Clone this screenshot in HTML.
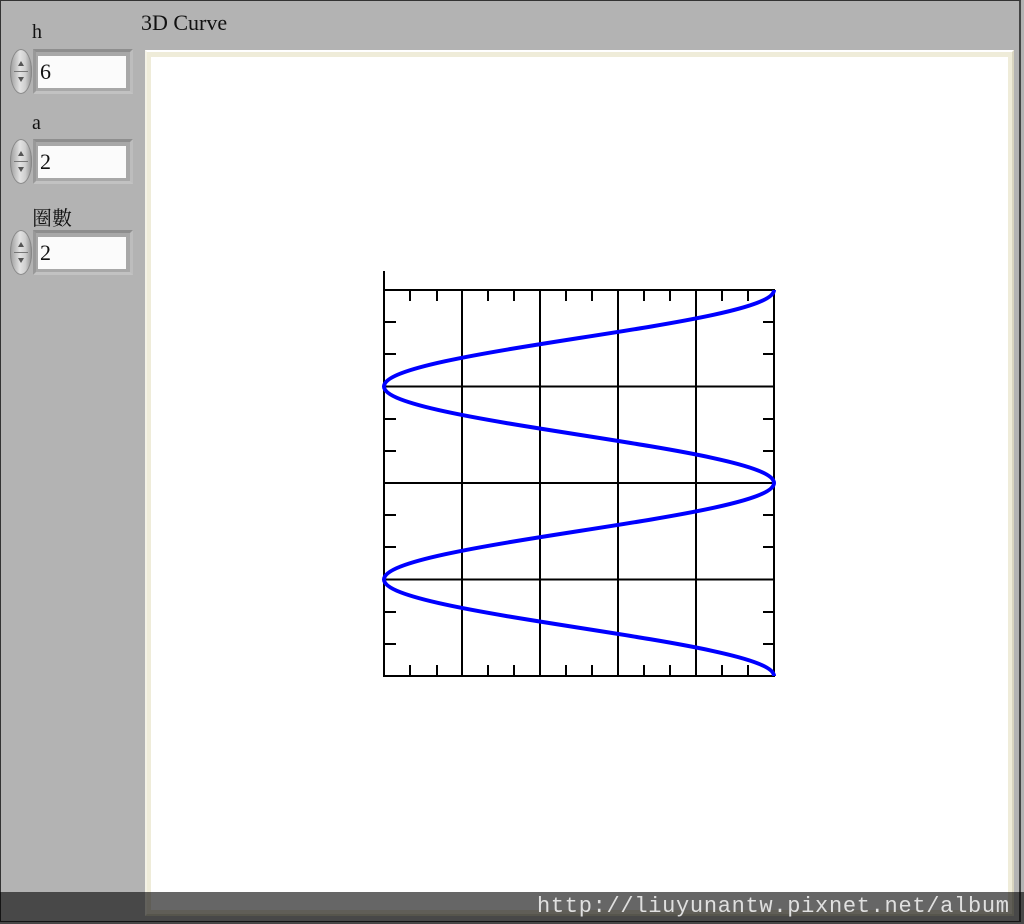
<!DOCTYPE html>
<html><head><meta charset="utf-8"><style>
html,body{margin:0;padding:0;}
body{width:1024px;height:924px;position:relative;overflow:hidden;background:#b3b3b3;font-family:"Liberation Serif","Noto Serif CJK TC",serif;}
.outer{position:absolute;left:0;top:0;width:1021px;height:922px;border:1px solid #333;border-right:2px solid #444;box-sizing:border-box;}
.lbl{position:absolute;font-size:20px;color:#111;}
.spin{position:absolute;left:10px;width:22px;height:45px;border-radius:11px/22px;background:linear-gradient(90deg,#9a9a9a,#e2e2e2 45%,#cfcfcf 70%,#8c8c8c);box-shadow:inset 0 0 0 1px #888;}
.spin:after{content:"";position:absolute;left:4px;right:4px;top:22px;height:1px;background:#777;}
.spin i{position:absolute;left:8px;width:0;height:0;border-left:3px solid transparent;border-right:3px solid transparent;}
.spin i.u{top:12px;border-bottom:5px solid #555;}
.spin i.d{top:28px;border-top:5px solid #555;}
.frm{position:absolute;left:33px;width:100px;height:45px;background:#a8a8a8;box-sizing:border-box;border-top:3px solid #8e8e8e;border-left:3px solid #999;border-right:3px solid #bdbdbd;border-bottom:3px solid #c2c2c2;}
.val{position:absolute;left:38px;width:88px;height:32px;background:#fbfbfb;font-size:22px;line-height:32px;padding-left:2px;box-sizing:border-box;color:#111;}
.panel{position:absolute;left:145px;top:50px;width:869px;height:866px;background:#efecd9;box-sizing:border-box;border-top:2px solid #fff;border-left:2px solid #f4f2e6;border-right:2px solid #d8d4bf;border-bottom:2px solid #d8d4bf;}
.inner{position:absolute;left:151px;top:57px;width:857px;height:853px;background:#fff;}
.bar{position:absolute;left:0;top:892px;width:1024px;height:32px;background:rgba(0,0,0,0.6);}
.url{position:absolute;left:537px;top:894px;font-family:"Liberation Mono",monospace;font-size:22px;color:#e0e0e0;letter-spacing:0.7px;}
</style></head><body>
<div class="outer"></div>
<div class="lbl" style="left:32px;top:21px">h</div>
<div class="lbl" style="left:32px;top:112px">a</div>
<div class="lbl" style="left:32px;top:202px">圈數</div>

<div class="spin" style="top:49px"><i class="u"></i><i class="d"></i></div>
<div class="frm" style="top:49px"></div>
<div class="val" style="top:56px">6</div>

<div class="spin" style="top:139px"><i class="u"></i><i class="d"></i></div>
<div class="frm" style="top:139px"></div>
<div class="val" style="top:146px">2</div>

<div class="spin" style="top:230px"><i class="u"></i><i class="d"></i></div>
<div class="frm" style="top:230px"></div>
<div class="val" style="top:237px">2</div>

<div class="lbl" style="left:141px;top:10px;font-size:22px">3D Curve</div>
<div class="panel"></div>
<div class="inner"></div>

<svg style="position:absolute;left:0;top:0" width="1024" height="924">
<g stroke="#000" stroke-width="2" fill="none">
<path d="M384,271V677M384,676H775M384,290H775M774,290V676"/>
<path d="M462,290V676M540,290V676M618,290V676M696,290V676M384,386.5H774M384,483H774M384,579.5H774"/>
<path d="M410,290v11M437,290v11M488,290v11M514,290v11M566,290v11M592,290v11M644,290v11M670,290v11M722,290v11M748,290v11"/>
<path d="M410,676v-11M437,676v-11M488,676v-11M514,676v-11M566,676v-11M592,676v-11M644,676v-11M670,676v-11M722,676v-11M748,676v-11"/>
<path d="M384,322h12M384,354h12M384,419h12M384,451h12M384,515h12M384,547h12M384,612h12M384,644h12"/>
<path d="M774,322h-11M774,354h-11M774,419h-11M774,451h-11M774,515h-11M774,547h-11M774,612h-11M774,644h-11"/>
</g>
<path d="M774,290 C774,325.2 384,350.8 384,386.5 C384,421.7 774,447.8 774,483 C774,518.2 384,543.8 384,579.5 C384,614.7 774,640.8 774,676" stroke="#0000ff" stroke-width="4" fill="none"/>
</svg>

<div class="bar"></div>
<div class="url">http://liuyunantw.pixnet.net/album</div>
</body></html>
